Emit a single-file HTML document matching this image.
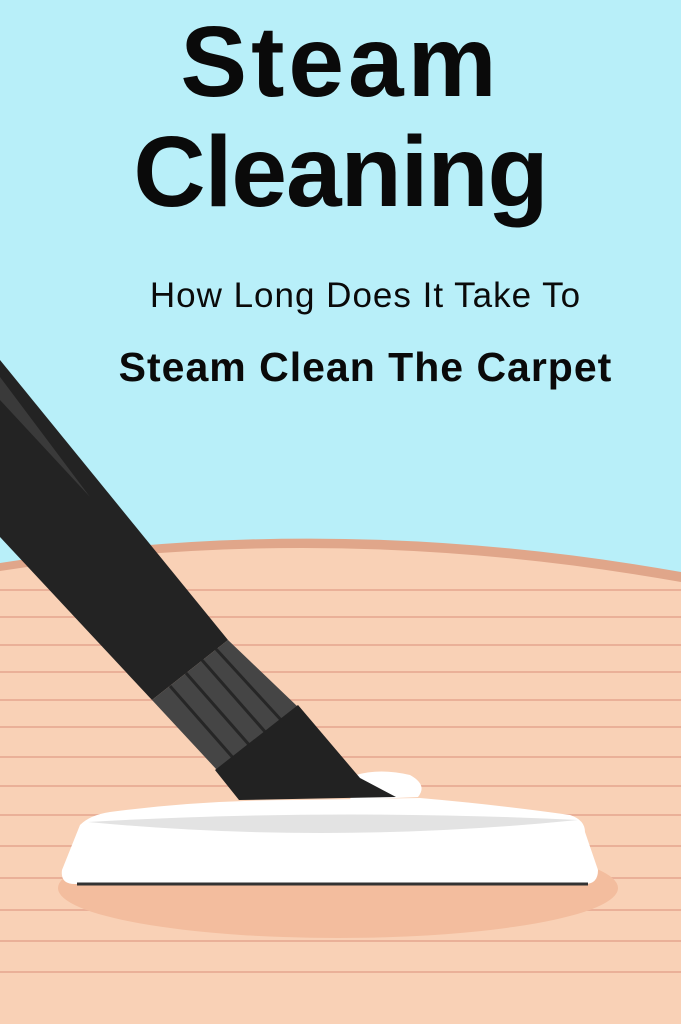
<!DOCTYPE html>
<html><head><meta charset="utf-8"><style>
html,body{margin:0;padding:0;width:681px;height:1024px;overflow:hidden;background:#b8eff9}
svg{position:absolute;left:0;top:0}
.t{position:absolute;left:0;width:681px;text-align:center;color:#0a0a0a;font-family:"Liberation Sans",sans-serif;white-space:nowrap}
</style></head><body>
<svg width="681" height="1024" viewBox="0 0 681 1024">
<rect width="681" height="1024" fill="#b8eff9"/>
<path d="M0 563 Q330 510 681 572 L681 1024 L0 1024Z" fill="#e0a68a"/>
<path d="M0 571 Q330 520 681 582 L681 1024 L0 1024Z" fill="#f9d1b6"/>
<g stroke="#eab098" stroke-width="2">
<line x1="0" y1="590" x2="681" y2="590"/><line x1="0" y1="617" x2="681" y2="617"/>
<line x1="0" y1="645" x2="681" y2="645"/><line x1="0" y1="672" x2="681" y2="672"/>
<line x1="0" y1="700" x2="681" y2="700"/><line x1="0" y1="727" x2="681" y2="727"/>
<line x1="0" y1="757" x2="681" y2="757"/><line x1="0" y1="786" x2="681" y2="786"/>
<line x1="0" y1="815" x2="681" y2="815"/><line x1="0" y1="846" x2="681" y2="846"/>
<line x1="0" y1="878" x2="681" y2="878"/><line x1="0" y1="910" x2="681" y2="910"/>
<line x1="0" y1="941" x2="681" y2="941"/><line x1="0" y1="972" x2="681" y2="972"/>
</g>
<ellipse cx="338" cy="888" rx="280" ry="50" fill="#f3bd9e"/>
<polygon points="0,360 228,640 152,700 0,537" fill="#232323"/>
<polygon points="0,377 90,497 0,400" fill="#3a3a3a"/>
<polygon points="152,700 228,640 298,707 217,770" fill="#454545"/>
<g stroke="#262626" stroke-width="3">
<line x1="170" y1="686" x2="235" y2="760"/><line x1="186" y1="673" x2="251" y2="747"/>
<line x1="202" y1="660" x2="267" y2="734"/><line x1="216" y1="649" x2="282" y2="721"/>
</g>
<path d="M356 775 Q380 768 410 775 Q428 785 418 797 L350 800Z" fill="#fff"/>
<path d="M80 825 Q90 815 110 812 Q200 800 300 800 L420 798 Q500 805 570 815 Q585 820 585 832 L598 870 Q598 884 585 884 L75 884 Q60 884 62 870 Z" fill="#fff"/>
<path d="M88 822 Q330 808 578 820 Q330 845 88 822Z" fill="#e3e3e3"/>
<line x1="77" y1="884" x2="588" y2="884" stroke="#333" stroke-width="3"/>
<polygon points="215,770 298,705 360,778 396,797 239,800" fill="#222"/>
</svg>
<div class="t" style="top:12px;font-size:100px;font-weight:bold;line-height:100px;letter-spacing:4px">Steam</div>
<div class="t" style="top:122px;font-size:100px;font-weight:bold;line-height:100px;letter-spacing:-1px">Cleaning</div>
<div class="t" style="top:276px;left:25px;font-size:35px;line-height:40px;letter-spacing:1px">How Long Does It Take To</div>
<div class="t" style="top:344px;left:25px;font-size:41px;font-weight:bold;line-height:46px;letter-spacing:1px">Steam Clean The Carpet</div>
</body></html>
